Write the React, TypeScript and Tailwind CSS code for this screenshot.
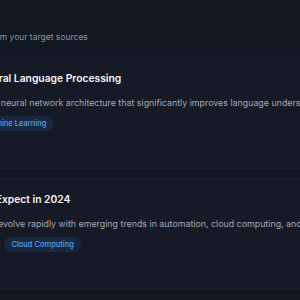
const articles = [
  {
    title: "Natural Language Processing",
    description:
      "A key neural network architecture that significantly improves language understanding across tasks.",
    tags: ["Machine Learning"],
  },
  {
    title: "AI – Expect in 2024",
    description:
      "Tech evolve rapidly with emerging trends in automation, cloud computing, and edge devices.",
    tags: ["AI", "Cloud Computing"],
  },
];

const App = () => {
  return (
    <div className="h-[300px] w-[300px] overflow-hidden bg-[#131722] font-['Inter',sans-serif]">
      <div className="ml-[-46px] w-[420px] pt-[31px]">
        {/* SUBTITLE */}
        <p className="ml-[-22px] whitespace-nowrap text-[8.5px] leading-[12px] text-[#8d929e]">
          Latest stories from your target sources
        </p>

        {/* ARTICLES */}
        <div className="mt-[14px] flex flex-col gap-[9px]">
          {articles.map((a) => (
            <div
              key={a.title}
              className="h-[112px] rounded-lg border border-[#20253280] bg-[#161a26] px-5 pt-[13px]"
            >
              <h3 className="whitespace-nowrap text-[10.3px] font-semibold leading-[14px] text-[#f1f3f6]">
                {a.title}
              </h3>
              <p className="mt-[10.5px] whitespace-nowrap text-[8.85px] leading-[13px] text-[#a3a8b4]">
                {a.description}
              </p>
              <div className="mt-[7.5px] flex gap-[8px]">
                {a.tags.map((t) => (
                  <span
                    key={t}
                    className="rounded-full bg-[#182840] px-[7px] py-[3px] text-[7.5px] font-medium leading-[9px] text-[#4ea3ee]"
                  >
                    {t}
                  </span>
                ))}
              </div>
            </div>
          ))}
        </div>
      </div>
    </div>
  );
};

export default App;
